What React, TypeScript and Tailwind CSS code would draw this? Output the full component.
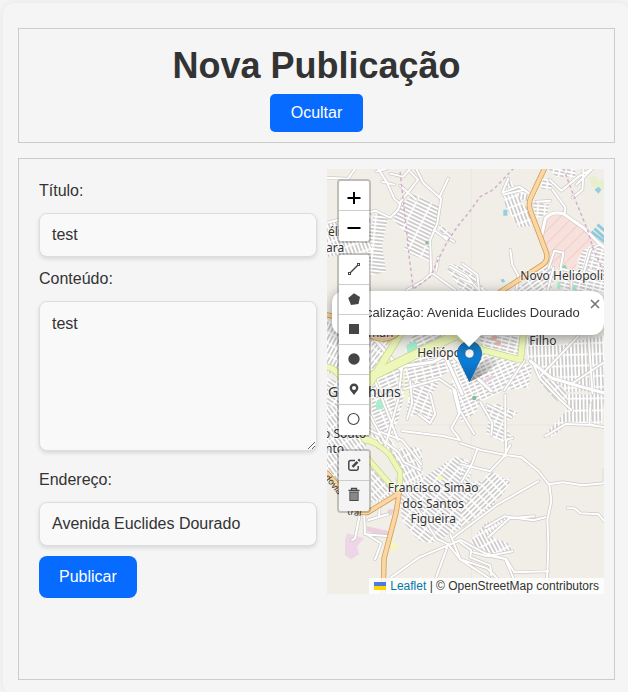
import React from "react";

type Block = { pts: string; angle: number; cell?: number };

const blocks: Block[] = [
  { pts: "415,194 439,207 436,226 431,240 430,262 414,256 403,250 408,242 407,236 392,218 400,205", angle: 26, cell: 14 },
  { pts: "375,212 388,218 382,245 386,272 370,276 366,240 372,225", angle: 6, cell: 22 },
  { pts: "327,222 372,214 368,232 372,252 327,257", angle: 70 },
  { pts: "440,224 453,235 448,240 437,230", angle: 40, cell: 7 },
  { pts: "449,264 470,268 482,292 462,292 447,270", angle: 32, cell: 8 },
  { pts: "508,179 516,188 522,204 530,210 530,226 518,228 505,206 503,196", angle: 70, cell: 9 },
  { pts: "516,190 532,195 530,202 518,199", angle: 100, cell: 11 },
  { pts: "541,179 552,180 552,190 541,189", angle: 10, cell: 6 },
  { pts: "548,169 575,169 575,178 556,177", angle: 12, cell: 6 },
  { pts: "532,201 549,202 547,214 536,219", angle: 5, cell: 7 },
  { pts: "583,250 597,243 604,246 604,292 566,292 556,283 578,276 578,258", angle: 14, cell: 7 },
  { pts: "525,283 548,264 556,270 550,292 508,292", angle: -36, cell: 9 },
  { pts: "460,287 475,280 488,292 460,292", angle: 35, cell: 8 },
  { pts: "327,320 337,326 352,330 370,335 370,376 360,385 327,372", angle: -62, cell: 10 },
  { pts: "327,378 352,386 372,394 360,412 327,404", angle: 35, cell: 9 },
  { pts: "327,406 366,410 370,436 355,470 341,486 327,468", angle: 54, cell: 10 },
  { pts: "371,335 398,335 386,356 371,374", angle: -52, cell: 9 },
  { pts: "390,368 401,362 413,335 457,335 440,345 398,364", angle: -26, cell: 10 },
  { pts: "372,378 402,366 404,396 398,420 390,438 372,424", angle: -23, cell: 9 },
  { pts: "404,362 460,348 466,362 444,374 438,379 428,382 405,388", angle: -14, cell: 8 },
  { pts: "410,381 440,378 437,387 430,396 434,424 418,414 406,418", angle: 22, cell: 8 },
  { pts: "478,336 521,336 519,358 500,355 483,350", angle: 14, cell: 8 },
  { pts: "460,350 474,348 491,354 519,361 532,366 528,388 504,390 480,402 476,412 461,423 458,400 449,391", angle: -24, cell: 6 },
  { pts: "481,406 498,404 518,412 513,418 503,422 513,440 504,443 486,434 488,422", angle: 24, cell: 7 },
  { pts: "525,336 557,345 604,336 604,402 586,391 568,392 540,376 528,361", angle: 88, cell: 11 },
  { pts: "538,372 558,384 567,394 566,407 553,398 540,383", angle: 48, cell: 12 },
  { pts: "567,394 604,395 601,424 565,425 551,438 544,435 565,412", angle: 89, cell: 12 },
  { pts: "371,466 395,492 380,501 371,502", angle: 48, cell: 8 },
  { pts: "372,430 392,440 404,464 399,470 388,454 372,446", angle: 60, cell: 7 },
  { pts: "399,448 421,447 423,478 402,486 396,469", angle: 62, cell: 8 },
  { pts: "399,492 421,479 446,462 455,456 474,462 468,482 510,478 491,508 452,533 430,543 418,540 402,520", angle: 38, cell: 11 },
  { pts: "460,460 471,463 461,479", angle: 25, cell: 7 },
  { pts: "490,470 510,482 502,495 461,528 461,510", angle: -44, cell: 9 },
  { pts: "485,523 507,515 508,522 490,536 508,543 513,551 486,556 470,541", angle: 62, cell: 12 },
];

const roads: { d: string; w?: number }[] = [
  { d: "M327 178L348 179L355 169M387 169L376 172M378 169L387 183L394 199L400 204M382 182L394 185M390 174L403 177L410 169M400 205L398 210L390 218L375 211L327 223" },
  { d: "M410 172L418 180L399 204M416 169L423 183L441 199L437 224L430 240L431 274L423 281L407 290M448 179L439 198M400 186L416 200M430 272L455 290M436 271L438 258M434 230L448 241M444 236L454 242M450 267L466 276L480 292" },
  { d: "M508 179L502 193L519 187L529 194M503 195L524 190M549 180L561 191L578 177L592 169M552 190L565 208L564 215M572 198L582 190L583 169M576 185L592 169M536 202L550 201" },
  { d: "M541 237L545 219Q551 211 563 214L583 228L598 243L604 248", w: 3 },
  { d: "M548 269L554 251L563 253L560 269L583 274L590 250L600 244M553 268L547 292M571 282L571 292M588 270L604 275M591 258L604 263" },
  { d: "M510 250L512 265L518 276L516 290M462 264L477 275L479 292M460 278L471 283" },
  { d: "M402 366L398 400L384 450M373 376L398 440M340 360L385 443M345 418L380 435M402 431L443 436L460 440M404 389L439 379L455 390L460 411L474 434M453 390L459 414L451 428L460 440M410 381L412 403L407 419M430 394L435 414L430 423L418 414" },
  { d: "M371 335L401 370M390 368L433 362L450 353L491 391M440 345L462 394M530 361L551 378L578 386L604 393", w: 3 },
  { d: "M504 390L524 361M533 364L539 378L559 399L571 410M540 376L578 336M588 336L592 393M571 384L604 362M604 427L589 425L590 404M545 436L565 424L593 425" },
  { d: "M480 402L492 423L491 435M505 395L505 440L512 438M487 405L511 417M460 443L481 450L506 455L521 457L538 471L549 485L551 501L547 519L548 546L546 594" },
  { d: "M510 445L503 457L490 471L460 464M477 449L472 463L461 482M506 440L505 456M538 481L517 493L496 505L452 538M549 484L562 482L582 485L604 483L604 470M567 508L574 508L580 513L598 514L604 521" },
  { d: "M360 513L355 538L352 540M364 513L365 534L389 536M365 533L381 543L375 559M380 500L379 516M368 520L388 514M397 479L420 513L436 538L448 544L460 559M460 542L471 550L470 557L490 565L491 575" },
  { d: "M460 540L419 557L391 577M448 544L436 577M450 534L460 559L480 572L513 594M487 555L506 559L514 572L548 571M505 559L520 594M460 559L487 568L497 578M485 527L504 516L533 520L545 517M488 537L509 518L534 516M512 551L487 556L473 552M461 540L485 553L506 559" },
  { d: "M383 440L398 452L404 462L420 470M381 432L402 440L421 464" },
];

const boundaries = [
  "M513 169L493 190L480 197L470 211L457 227L447 242L438 260L430 277L415 288",
  "M400 173L403 200L406 227L409 257L413 288",
  "M563 169L576 203L587 230L593 250L604 274",
];

const yellowRoads: { d: string; w: number }[] = [
  { d: "M400 334L370 383", w: 7 },
  { d: "M362 381L410 357L460 333", w: 9 },
  { d: "M327 367Q336 368 345 383L360 388L370 376", w: 6 },
  { d: "M460 338L482 350L520 360L523 334", w: 6 },
  { d: "M362 418L364 440Q377 442 389 454L400 472L400 480L397 494M364 454L390 484M358 434L376 443", w: 5 },
];

const orangeRoads = [
  "M544 169L530 199Q528 205 530 211L546 253Q548 261 542 265L500 292",
  "M327 315L345 319L360 329Q382 347 398 333",
  "M327 473L343 491Q353 515 368 512L399 493L396 512L384 558L383 594",
];

const labels: { x: number; y: number; t: string; s?: number; mid?: boolean }[] = [
  { x: 328, y: 236, t: "éli" },
  { x: 326, y: 252, t: "ara" },
  { x: 520, y: 280, t: "Novo Heliópolis" },
  { x: 368, y: 337, t: "man" },
  { x: 417, y: 357, t: "Heliópolis" },
  { x: 529, y: 345, t: "Filho" },
  { x: 328, y: 397, t: "Garanhuns", s: 14 },
  { x: 323, y: 438, t: "o Souto" },
  { x: 325, y: 453, t: "nto" },
  { x: 433, y: 492, t: "Francisco Simão", mid: true },
  { x: 433, y: 508, t: "dos Santos", mid: true },
  { x: 433, y: 523, t: "Figueira", mid: true },
];

function MapTiles() {
  return (
    <svg
      className="absolute inset-0 h-full w-full"
      viewBox="327 169 277 425"
      preserveAspectRatio="xMidYMid slice"
      aria-hidden="true"
    >
      <defs>
        {blocks.map((b, i) => (
          <pattern
            key={i}
            id={`streets-${i}`}
            width={b.cell ?? 10}
            height="3.6"
            patternUnits="userSpaceOnUse"
            patternTransform={`rotate(${b.angle})`}
          >
            <rect width={b.cell ?? 10} height="3.6" fill="#fff" />
            <rect x="1.4" y="0.9" width={(b.cell ?? 10) - 1.6} height="1.8" fill="#cecccb" />
          </pattern>
        ))}
        <pattern id="barracks" width="9" height="9" patternUnits="userSpaceOnUse" patternTransform="rotate(45)">
          <rect width="9" height="9" fill="#f6e1dc" />
          <rect width="1" height="9" fill="#f8cbc5" />
        </pattern>
      </defs>
      <rect x="327" y="169" width="277" height="425" fill="#f1eee8" />
      <path d="M471 169V594M327 425H604" stroke="#e9e6e0" strokeWidth="1" />
      <path d="M588 178l7-2 3 5 6-1v10l-13-3z" fill="#e8efcf" />
      <path d="M594 190l4-3 3 3-3 4zM503 210h4v6h-4zM500 280l3-1 2 3-3 1z" fill="#93cfe0" />
      <path d="M591 232l13 10M594 229l10 9M597 225l7 6" stroke="#8fcbdc" strokeWidth="3" />
      <path d="M542 237L546 219Q551 212 563 215L583 229L597 242L585 249L577 260L575 270L552 268L547 258Z" fill="url(#barracks)" />
      <path d="M402 366l20-8-8 44-13-4zM380 381h12l-1 16-9 2z" fill="#f1f5cc" />
      <path d="M345 540l2-7 17 5-7 8 2 8-8 5-6-4z" fill="#ecd6e7" />
      <path d="M367 526l22 5-1 6-21-6zM388 509h6l-2 6-5-2z" fill="#eccfdd" />
      {blocks.map((b, i) => (
        <polygon key={i} points={b.pts} fill={`url(#streets-${i})`} />
      ))}
      <path d="M406 345l10-4 2 9-10 6zM376 402l6-4 1 11-7 1zM557 282h3v7h-3zM570 286h6v4h-6z" fill="#a5efd0" />
      <path d="M561 267l4-2 2 5-4 2z" fill="#7bdcae" />
      <circle cx="427" cy="243" r="2" fill="#8dbf9a" />
      <circle cx="474" cy="398" r="2.2" fill="#88b99a" />
      <path d="M483 380l10-5 1 3-9 5z" fill="#ead0e3" />
      <path d="M490 338l5-3 2 4-5 2zM492 343l9-2-1 5z" fill="#eeb9b0" />
      <path d="M391 541l8 5-8 6zM438 475l5 1-1 4-5-1z" fill="#f6f7b9" />
      <g fill="none" strokeLinejoin="round" strokeLinecap="round">
        {roads.map((r, i) => (
          <path key={i} d={r.d} stroke="#cdcac7" strokeWidth={(r.w ?? 2) + 1.4} />
        ))}
        {roads.map((r, i) => (
          <path key={i} d={r.d} stroke="#fff" strokeWidth={r.w ?? 2} />
        ))}
        {boundaries.map((d, i) => (
          <path key={i} d={d} stroke="#d3aecb" strokeWidth="1.5" strokeDasharray="2 4" />
        ))}
        {yellowRoads.map((r, i) => (
          <path key={i} d={r.d} stroke="#cbd68c" strokeWidth={r.w + 1} />
        ))}
        {yellowRoads.map((r, i) => (
          <path key={i} d={r.d} stroke="#edf7ba" strokeWidth={r.w - 0.5} />
        ))}
        {orangeRoads.map((d, i) => (
          <path key={i} d={d} stroke="#cfa052" strokeWidth="5.4" />
        ))}
        {orangeRoads.map((d, i) => (
          <path key={i} d={d} stroke="#fcd6a4" strokeWidth="3.8" />
        ))}
      </g>
      <g className="font-['Noto_Sans',sans-serif]" fill="#333">
        <g stroke="#fff" strokeOpacity="0.6" strokeWidth="2" paintOrder="stroke">
          {labels.map((l) => (
            <text key={l.t} x={l.x} y={l.y} fontSize={l.s ?? 12} textAnchor={l.mid ? "middle" : "start"}>
              {l.t}
            </text>
          ))}
        </g>
        <text fontSize="9" transform="translate(324 477) rotate(52)">
          dovia
        </text>
        <text fontSize="9" transform="translate(347 514) rotate(8)">
          tral
        </text>
      </g>
    </svg>
  );
}

function Marker() {
  return (
    <svg className="absolute left-[130px] top-[172px] h-[42px] w-[50px]" viewBox="0 0 50 42" aria-label="Marcador">
      <defs>
        <linearGradient id="pin" x1="0" y1="0" x2="0" y2="1">
          <stop offset="0" stopColor="#1a7cc4" />
          <stop offset="0.5" stopColor="#0a7dd6" />
          <stop offset="1" stopColor="#0a62b0" />
        </linearGradient>
        <linearGradient id="pin-shadow" x1="0" y1="1" x2="1" y2="0">
          <stop offset="0" stopColor="#000" stopOpacity="0.4" />
          <stop offset="1" stopColor="#000" stopOpacity="0.02" />
        </linearGradient>
      </defs>
      <path d="M13 41Q18 26 28 18Q40 12 41 19Q40 27 13 41Z" fill="url(#pin-shadow)" />
      <path
        d="M12.500 .5C5.500 .5.500 6 .500 12.500C.500 16 2 19 3.500 22L12.500 40.500L21.500 22C23 19 24.500 16 24.500 12.500C24.500 6 19.500 .5 12.500 .5Z"
        fill="url(#pin)"
        stroke="#1b6ba8"
      />
      <circle cx="12.500" cy="12.500" r="4.500" fill="#fff" stroke="#1c6aa5" strokeWidth=".6" />
    </svg>
  );
}

const drawTools: { name: string; icon: React.ReactNode }[] = [
  {
    name: "Desenhar linha",
    icon: (
      <g fill="#fff" stroke="#464646">
        <path d="M4 12L12 4" strokeWidth="1.500" />
        <rect x="2.500" y="11.500" width="2" height="2" />
        <rect x="11.500" y="2.500" width="2" height="2" />
      </g>
    ),
  },
  { name: "Desenhar polígono", icon: <path d="M8 2.200L14 6L12.500 13L5 14L2.200 7Z" fill="#464646" /> },
  { name: "Desenhar retângulo", icon: <rect x="3" y="3" width="10" height="10" fill="#464646" /> },
  { name: "Desenhar círculo", icon: <circle cx="8" cy="8" r="5.700" fill="#464646" /> },
  {
    name: "Desenhar marcador",
    icon: (
      <path
        fillRule="evenodd"
        d="M8 2.500A4.400 4.400 0 0 0 3.600 6.900C3.600 9.500 6.500 11.500 8 14C9.500 11.500 12.400 9.500 12.400 6.900A4.400 4.400 0 0 0 8 2.500ZM8 5A2 2 0 1 1 8 9A2 2 0 1 1 8 5Z"
        fill="#464646"
      />
    ),
  },
  {
    name: "Desenhar marcador circular",
    icon: <circle cx="7.500" cy="8" r="5.500" fill="none" stroke="#464646" strokeWidth="1.200" />,
  },
];

const editTools: { name: string; icon: React.ReactNode }[] = [
  {
    name: "Editar camadas",
    icon: (
      <g fill="none" stroke="#464646" strokeWidth="1.500">
        <path d="M9 3.500H4.500Q2.800 3.500 2.800 5.200V11.500Q2.800 13.200 4.500 13.200H10.500Q12.200 13.200 12.200 11.500V9" />
        <path d="M6.500 9.800L11.500 4.800" strokeWidth="2.500" />
        <path d="M12.500 3.800L13.800 2.500" strokeWidth="2.500" />
      </g>
    ),
  },
  {
    name: "Excluir camadas",
    icon: (
      <g stroke="#464646" fill="none">
        <path d="M2.500 3.500H13.500M5.500 3V1.500H10.500V3" strokeWidth="1.300" />
        <rect x="3.900" y="5.200" width="8.200" height="8.300" fill="#999" />
        <path d="M6 5.500V13M8 5.500V13M10 5.500V13" stroke="#777" />
      </g>
    ),
  },
];

function ToolBar({ tools, disabled }: { tools: typeof drawTools; disabled?: boolean }) {
  return (
    <div className="flex flex-col divide-y divide-[#ccc] overflow-hidden rounded border-2 border-black/20 bg-clip-padding">
      {tools.map((t) => (
        <button
          key={t.name}
          type="button"
          aria-label={t.name}
          className={`flex size-[30px] items-center justify-center pb-[2px] ${disabled ? "bg-[#f4f4f4]" : "bg-white"}`}
        >
          <svg className="size-4" viewBox="0 0 16 16">
            {t.icon}
          </svg>
        </button>
      ))}
    </div>
  );
}

function Map() {
  return (
    <section aria-label="Mapa" className="relative h-[425px] min-w-0 overflow-hidden bg-[#f1eee8]">
      <MapTiles />
      <Marker />
      <div className="absolute left-[5px] top-[122px] drop-shadow-[0_3px_7px_rgba(0,0,0,0.4)]">
        <div className="rounded-xl bg-white py-[13px] pl-5 pr-6 text-[13px] leading-[18px] whitespace-nowrap text-[#333]">
          Localização: Avenida Euclides Dourado
        </div>
        <svg className="absolute left-[121px] top-full h-3 w-8" viewBox="0 0 32 12" aria-hidden="true">
          <path d="M4 0H28L16 12Z" fill="#fff" />
        </svg>
      </div>
      <button
        type="button"
        aria-label="Fechar"
        className="absolute right-0 top-[125px] flex h-5 w-[18px] items-center justify-center"
      >
        <svg className="size-[10px]" viewBox="0 0 10 10">
          <path d="M1 1L9 9M9 1L1 9" stroke="#757575" strokeWidth="1.600" />
        </svg>
      </button>
      <div className="absolute left-[10px] top-[10px] flex flex-col">
        <div className="mb-[10px] flex flex-col divide-y divide-[#ccc] overflow-hidden rounded border-2 border-black/20 bg-clip-padding">
          <button type="button" aria-label="Aproximar" className="flex size-[30px] items-center justify-center bg-white pt-1">
            <svg className="h-3 w-[14px]" viewBox="0 0 14 12">
              <path d="M.5 6H13.500M7 0V12" stroke="#000" strokeWidth="2" />
            </svg>
          </button>
          <button type="button" aria-label="Afastar" className="flex size-[30px] items-center justify-center bg-white pt-1">
            <svg className="h-3 w-[14px]" viewBox="0 0 14 12">
              <path d="M.5 6H13.500" stroke="#000" strokeWidth="2" />
            </svg>
          </button>
        </div>
        <div className="mb-3">
          <ToolBar tools={drawTools} />
        </div>
        <ToolBar tools={editTools} disabled />
      </div>
      <div className="absolute bottom-0 right-0 bg-white/80 px-[5px] text-xs leading-4 whitespace-nowrap text-[#333]">
        <a href="#leaflet" className="text-[#0078a8]">
          <svg className="mr-1 inline h-2 w-3 align-baseline" viewBox="0 0 12 8" aria-hidden="true">
            <path fill="#4c7be1" d="M0 0h12v4H0z" />
            <path fill="#ffd500" d="M0 4h12v4H0z" />
          </svg>
          Leaflet
        </a>{" "}
        | © OpenStreetMap contributors
      </div>
    </section>
  );
}

const field =
  "block w-full rounded-lg border border-[#ddd] bg-[#f9f9f9] px-3 text-base text-[#333] shadow-[0_2px_4px_rgba(0,0,0,0.12)] outline-none";

export default function App() {
  return (
    <div className="min-h-screen overflow-hidden bg-[#f4f4f4] pl-[3px] pt-[3px] font-['Liberation_Sans',Arial,sans-serif] text-[#333]">
      <main className="-mr-[2px] min-h-screen rounded-xl bg-[#f5f5f5] px-[15px] pt-[25px] shadow-[0_0_8px_rgba(0,0,0,0.06)]">
        <header className="flex flex-col items-center border border-[#ccc] p-[10px]">
          <h1 className="mb-[2px] text-4xl leading-[53px] font-bold">Nova Publicação</h1>
          <button type="button" className="h-[38px] rounded-[5px] bg-[#076bff] px-[21px] text-base font-medium text-white">
            Ocultar
          </button>
        </header>
        <div className="mt-[15px] grid grid-cols-2 gap-[10px] border border-[#ccc] pt-[10px] pr-[10px] pb-[81px] pl-5">
          <form className="min-w-0" onSubmit={(e) => e.preventDefault()}>
            <label htmlFor="titulo" className="my-[10px] block leading-6">
              Título:
            </label>
            <input id="titulo" defaultValue="test" className={`${field} h-11`} />
            <label htmlFor="conteudo" className="my-[10px] block leading-6">
              Conteúdo:
            </label>
            <textarea id="conteudo" defaultValue="test" className={`${field} h-[150px] resize py-[10px]`} />
            <label htmlFor="endereco" className="mt-[17px] mb-[10px] block leading-6">
              Endereço:
            </label>
            <input id="endereco" defaultValue="Avenida Euclides Dourado" className={`${field} h-11`} />
            <button
              type="submit"
              className="mt-[10px] h-[42px] rounded-lg bg-[#076bff] px-5 text-base font-medium text-white"
            >
              Publicar
            </button>
          </form>
          <Map />
        </div>
      </main>
    </div>
  );
}
